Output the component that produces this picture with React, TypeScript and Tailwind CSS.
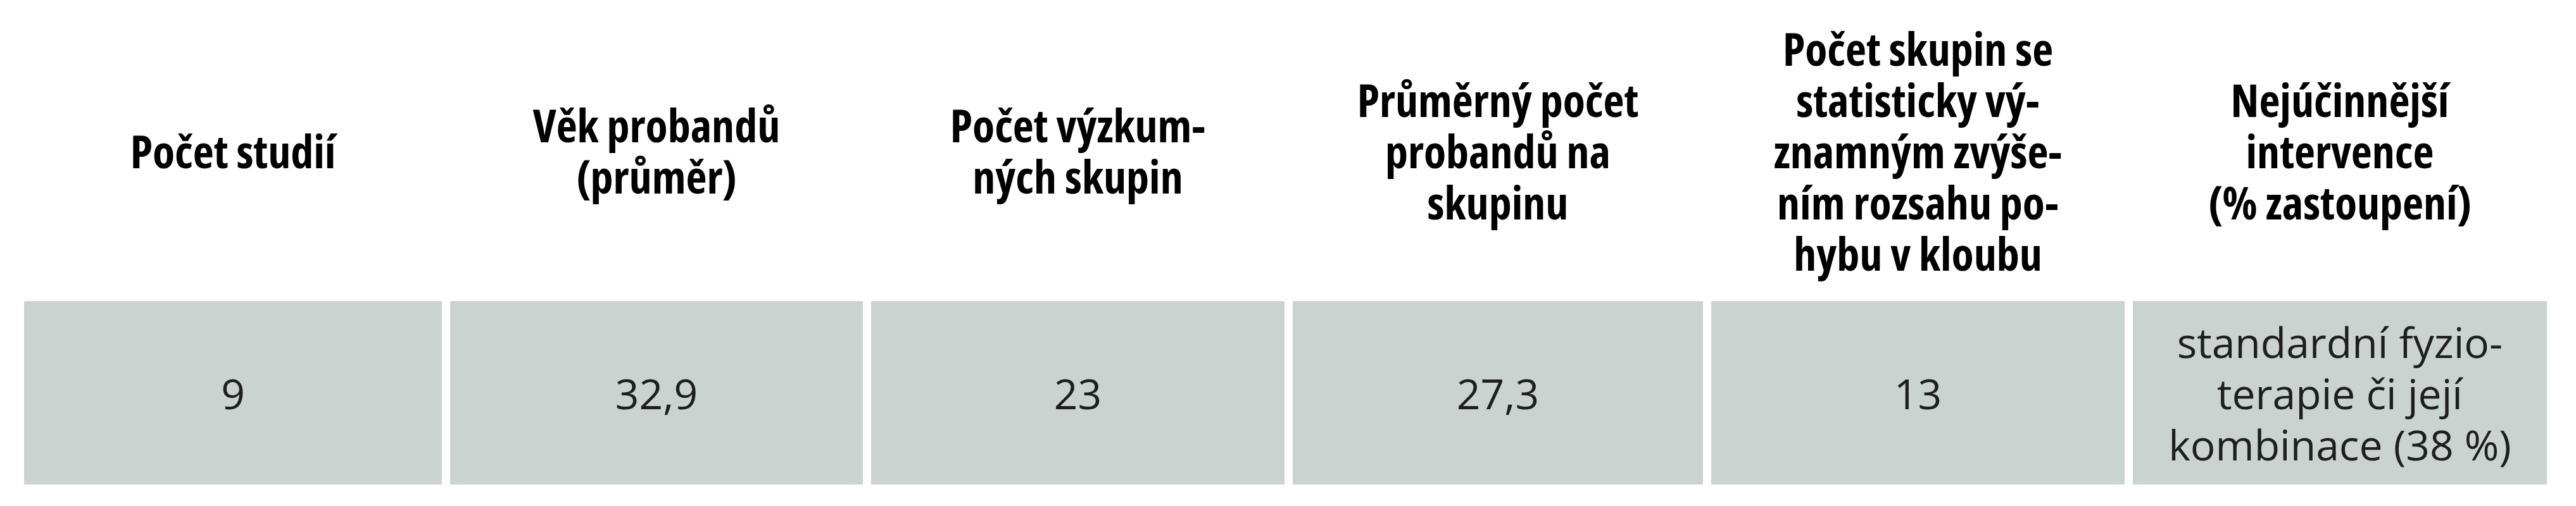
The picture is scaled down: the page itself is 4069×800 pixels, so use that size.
import React from "react";

const headerLines = [
  ["Počet studií"],
  ["Věk probandů", "(průměr)"],
  ["Počet výzkum-", "ných skupin"],
  ["Průměrný počet", "probandů na", "skupinu"],
  ["Počet skupin se", "statisticky vý-", "znamným zvýše-", "ním rozsahu po-", "hybu v kloubu"],
  ["Nejúčinnější", "intervence", "(% zastoupení)"],
];

const values = [
  ["9"],
  ["32,9"],
  ["23"],
  ["27,3"],
  ["13"],
  ["standardní fyzio-", "terapie či její", "kombinace (38 %)"],
];

export default function App() {
  return (
    <div
      className="w-[4069px] h-[800px] bg-white pl-[38px]"
      style={{ fontFamily: '"Open Sans", "DejaVu Sans", sans-serif' }}
    >
      <div className="grid grid-cols-[660px_652px_653px_648px_653px_654px] gap-x-[13px]">
        {/* header row */}
        {headerLines.map((lines) => (
          <div
            key={lines.join(" ")}
            className="h-[476px] flex flex-col items-center justify-center text-center text-[72px] leading-[81px] font-bold font-stretch-[85%] text-black"
          >
            {lines.map((l) => (
              <span key={l}>{l}</span>
            ))}
          </div>
        ))}
        {/* data row */}
        {values.map((lines) => (
          <div
            key={lines.join(" ")}
            className="h-[290px] bg-[#cbd3d1] flex flex-col items-center justify-center text-center text-[66px] leading-[81px] font-normal text-[#1e1e1e]"
          >
            {lines.map((l) => (
              <span key={l}>{l}</span>
            ))}
          </div>
        ))}
      </div>
    </div>
  );
}
